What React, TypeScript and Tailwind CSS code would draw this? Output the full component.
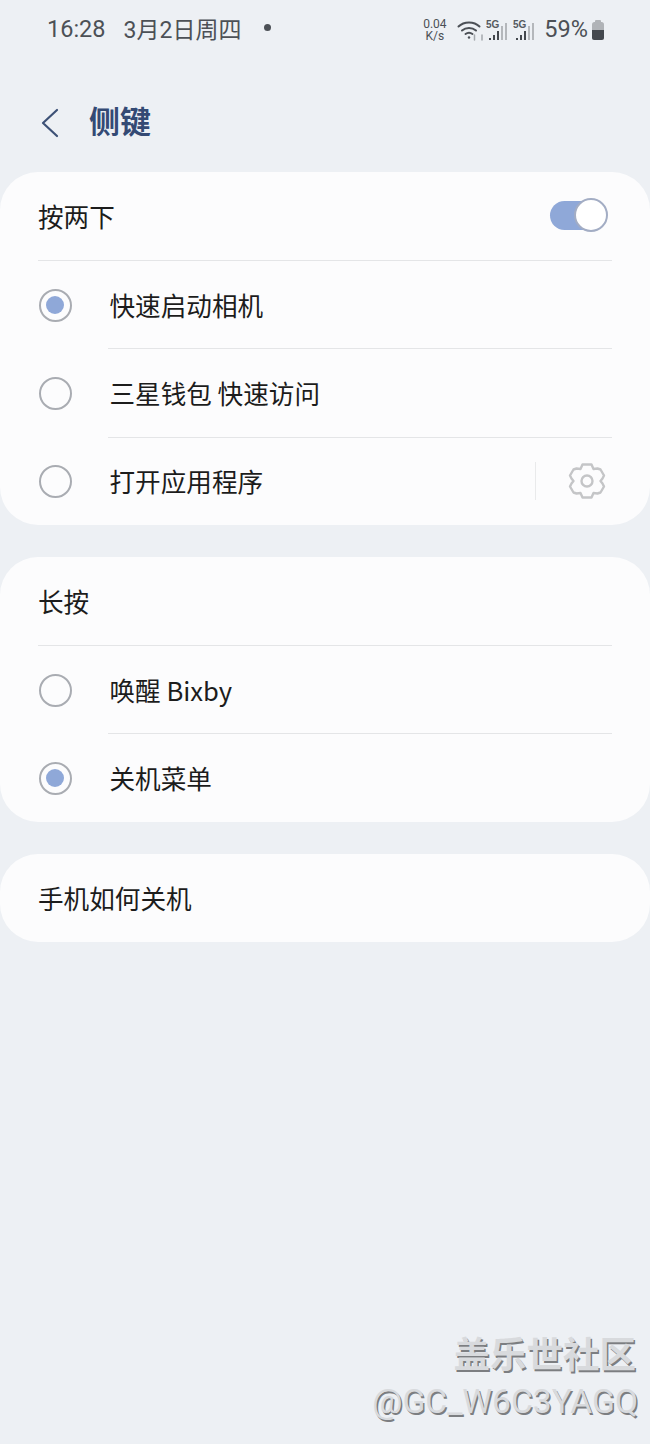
import React from "react";

const Radio = ({ on }: { on?: boolean }) => (
  <div className="w-[33px] h-[33px] rounded-full border-2 border-[#a9acb2] flex items-center justify-center shrink-0">
    {on && <div className="w-[18px] h-[18px] rounded-full bg-[#8fa8d8]" />}
  </div>
);

const Row = ({ label, on, last, gear }: { label: string; on?: boolean; last?: boolean; gear?: boolean }) => (
  <div className={`flex items-center pl-[38.5px] pr-[38px] ${last ? "h-[87.5px]" : "h-[88.25px]"}`}>
    <Radio on={on} />
    <div className={`ml-[36px] pl-[2px] flex-1 h-full flex items-center ${last ? "" : "border-b border-[#e4e5e7]"}`}>
      <span className="text-[25.6px] text-[#1c1c1c] leading-none font-['Noto_Sans_CJK_SC',sans-serif]">{label}</span>
      {gear && (
        <div className="ml-auto flex items-center">
          <div className="w-px h-[38px] bg-[#e9eaeb]" />
          <svg className="ml-[31px] mr-[5px]" width="40" height="40" viewBox="0 0 40 40" fill="none" stroke="#c4c5c7" strokeWidth="2.400" strokeLinejoin="round">
            <path d="M15.500 3.500h9l2 4.500 4-.5 3 1 3.500 6-1.500 3-2 2.500 2 2.500 1.500 3-3.500 6-3 1-4-.5-2 4.500h-9l-2-4.500-4 .5-3-1-3.500-6 1.500-3 2-2.500-2-2.500-1.500-3 3.500-6 3-1 4 .5z" />
            <circle cx="20" cy="20" r="5.500" />
          </svg>
        </div>
      )}
    </div>
  </div>
);

const Signal = () => (
  <svg width="23" height="24" viewBox="0 0 23 24">
    <text x="0" y="10" fontSize="10" fontWeight="700" fill="#55595f" fontFamily="'Liberation Sans', sans-serif">5G</text>
    <rect x="3" y="20" width="2" height="2" fill="#44484e" />
    <rect x="7" y="17" width="2" height="5" fill="#44484e" />
    <rect x="11" y="13" width="2" height="9" fill="#44484e" />
    <rect x="15" y="8" width="2" height="14" fill="#b4b7bb" />
    <rect x="19" y="5" width="2" height="17" fill="#b4b7bb" />
  </svg>
);

export default function App() {
  return (
    <div className="relative w-[650px] h-[1444px] bg-[#edf0f4] overflow-hidden">
      <div className="font-['Roboto','Noto_Sans_CJK_SC',sans-serif]">
        {/* Status bar */}
        <div className="h-[58px] pl-[47px] pr-[45px] pt-[2px] flex items-center text-[#4c5056]">
          <span className="text-[23.500px] leading-none">16:28</span>
          <span className="text-[23px] leading-none ml-[18px]">3月2日周四</span>
          <div className="w-[7px] h-[7px] rounded-full bg-[#4c5056] ml-[23px] mb-[5px]" />
          <div className="ml-auto flex items-center">
            <div className="flex flex-col items-center text-[12px] leading-[12px] text-[#4c5056] w-[27px]">
              <span>0.04</span>
              <span>K/s</span>
            </div>
            <svg className="ml-[9px]" width="26" height="24" viewBox="0 0 26 24" fill="none" stroke="#4c5056" strokeWidth="2" strokeLinecap="round">
              <path d="M1.500 8.500C7 3 17 3 22.500 8.500" />
              <path d="M5 12.500C9 9 15 9 19 12.500" />
              <path d="M8.500 16C10.500 14.500 13.500 14.500 15.500 16" />
              <circle cx="12" cy="19.500" r="1.200" fill="#4c5056" stroke="none" />
              <path d="M17.500 17v5M25 17v5" stroke="#a4a8ad" strokeWidth="1.500" />
            </svg>
            <div className="ml-[3px]"><Signal /></div>
            <div className="ml-[4px]"><Signal /></div>
            <span className="ml-[8px] text-[23.500px] leading-none">59%</span>
            <svg className="ml-[3px]" width="14" height="21" viewBox="0 0 14 21">
              <rect x="4" y="0" width="6" height="3" rx="1" fill="#b0b3b7" />
              <rect x="1" y="2" width="12" height="18" rx="2.500" fill="#b0b3b7" />
              <path d="M1 10h12v7.500a2.500 2.500 0 0 1-2.500 2.500h-7A2.500 2.500 0 0 1 1 17.500z" fill="#44484e" />
            </svg>
          </div>
        </div>

        {/* Title */}
        <div className="h-[114px] pl-[41px] flex items-center pt-[15px]">
          <svg width="18" height="30" viewBox="0 0 18 30" fill="none" stroke="#3d5176" strokeWidth="2.200" strokeLinecap="round" strokeLinejoin="round">
            <path d="M16 2 2 15l14 13" />
          </svg>
          <span className="ml-[30px] text-[31px] font-bold leading-none text-[#344a74]">侧键</span>
        </div>

        {/* Cards */}
        <div className="flex flex-col gap-[32px]">
          <div className="bg-[#fcfcfd] rounded-[38px]">
            <div className="mx-[38px] h-[89px] flex items-center justify-between border-b border-[#e4e5e7]">
              <span className="text-[25.6px] text-[#1c1c1c] leading-none font-['Noto_Sans_CJK_SC',sans-serif]">按两下</span>
              <div className="relative w-[58px] h-[34px] mr-[4px] mb-[2px]">
                <div className="absolute left-0 top-[2.500px] w-[50px] h-[29px] rounded-full bg-[#8fa8d8]" />
                <div className="absolute right-0 top-0 w-[34px] h-[34px] rounded-full bg-white border-2 border-[#a3adc4]" />
              </div>
            </div>
            <Row label="快速启动相机" on />
            <Row label="三星钱包 快速访问" />
            <Row label="打开应用程序" last gear />
          </div>

          <div className="bg-[#fcfcfd] rounded-[38px]">
            <div className="mx-[38px] h-[89px] flex items-center border-b border-[#e4e5e7]">
              <span className="text-[25.6px] text-[#1c1c1c] leading-none font-['Noto_Sans_CJK_SC',sans-serif]">长按</span>
            </div>
            <Row label="唤醒 Bixby" />
            <Row label="关机菜单" on last />
          </div>

          <div className="bg-[#fcfcfd] rounded-[38px] h-[88px] px-[38px] flex items-center">
            <span className="text-[25.6px] text-[#1c1c1c] leading-none font-['Noto_Sans_CJK_SC',sans-serif]">手机如何关机</span>
          </div>
        </div>
      </div>

      {/* Watermark overlay */}
      <div className="absolute right-[12px] top-[1334px] flex flex-col items-end font-['Roboto','Noto_Sans_CJK_SC',sans-serif] text-[#d8dadd] [text-shadow:1.500px_1.500px_0_#7c7e81]">
        <span className="text-[36.500px] font-bold leading-[44px] mr-[2px]">盖乐世社区</span>
        <span className="text-[33.600px] leading-[36px] mt-[6px]">@GC_W6C3YAGQ</span>
      </div>
    </div>
  );
}
